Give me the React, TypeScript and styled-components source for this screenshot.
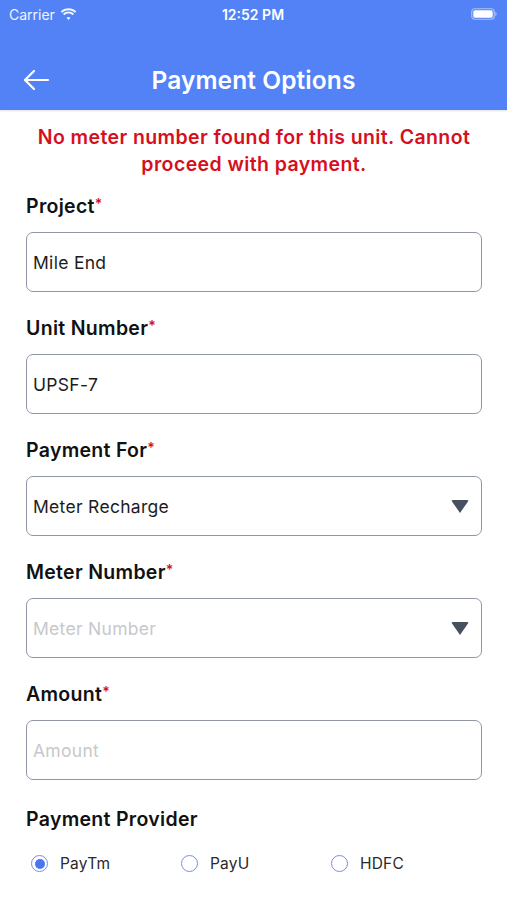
import styled, { createGlobalStyle } from "styled-components";

const GlobalStyle = createGlobalStyle`
  html, body {
    margin: 0;
    padding: 0;
    background: #ffffff;
  }
  body {
    font-family: "Inter", "Liberation Sans", sans-serif;
    -webkit-font-smoothing: antialiased;
  }
`;

const Screen = styled.div`
  width: 507px;
  height: 900px;
  overflow: hidden;
  display: flex;
  flex-direction: column;
  background: #ffffff;
`;

const Header = styled.header`
  background: #5282f6;
  height: 110px;
  display: flex;
  flex-direction: column;
  box-shadow: 0 1px 2px rgba(0, 0, 0, 0.12);
`;

const StatusBar = styled.div`
  height: 28px;
  display: grid;
  grid-template-columns: 1fr auto 1fr;
  align-items: center;
  padding: 0 10px 0 9px;
  color: #ffffff;
  font-size: 14px;
`;

const Carrier = styled.div`
  display: flex;
  align-items: center;
  gap: 5px;
  opacity: 0.92;
`;

const Clock = styled.div`
  font-weight: 600;
`;

const Battery = styled.div`
  justify-self: end;
  display: flex;
  align-items: center;
`;

const NavBar = styled.div`
  flex: 1;
  display: flex;
  align-items: center;
  position: relative;
  justify-content: center;
  padding-top: 22px;
`;

const BackButton = styled.button`
  position: absolute;
  left: 22px;
  top: calc(50% + 11px);
  transform: translateY(-50%);
  background: none;
  border: 0;
  padding: 0;
  display: flex;
`;

const Title = styled.h1`
  margin: 0;
  color: #ffffff;
  font-size: 24.5px;
  font-weight: 600;
  letter-spacing: 0.1px;
`;

const Body = styled.div`
  padding: 14px 25px 0 26px;
  display: flex;
  flex-direction: column;
`;

const ErrorText = styled.p`
  margin: 0 0 16px;
  color: #d5101e;
  text-align: center;
  font-size: 19.5px;
  font-weight: 600;
  line-height: 27px;
  letter-spacing: 0.4px;
  white-space: nowrap;
`;

const Field = styled.div`
  display: flex;
  flex-direction: column;
  margin-bottom: 24px;
`;

const Label = styled.label<{ $gap?: number }>`
  color: #111111;
  font-size: 19.5px;
  font-weight: 600;
  line-height: 24px;
  letter-spacing: 0.3px;
  margin-top: ${(p) => p.$gap ?? 0}px;
  margin-bottom: 14px;
`;

const Star = styled.span`
  color: #d5101e;
  font-size: 14px;
  vertical-align: top;
  position: relative;
  top: -2px;
`;

const Box = styled.div<{ $placeholder?: boolean }>`
  height: 60px;
  box-sizing: border-box;
  border: 1.5px solid #9096a6;
  border-radius: 7px;
  display: flex;
  align-items: center;
  justify-content: space-between;
  padding: 0 12px 0 6px;
  font-size: 17.5px;
  letter-spacing: 0.3px;
  color: ${(p) => (p.$placeholder ? "#c6c8cc" : "#1c1c1c")};
`;

const Caret = styled.span`
  width: 0;
  height: 0;
  border-left: 9px solid transparent;
  border-right: 9px solid transparent;
  border-top: 13px solid #46505e;
  border-radius: 2px;
`;

const RadioRow = styled.div`
  display: grid;
  grid-template-columns: repeat(3, 150px);
  padding: 9px 0 0 5px;
`;

const RadioOption = styled.div`
  display: flex;
  align-items: center;
  gap: 12px;
  font-size: 15.5px;
  letter-spacing: 0.2px;
  color: #2a2a2a;
`;

const RadioCircle = styled.span<{ $checked?: boolean }>`
  width: 17px;
  height: 17px;
  box-sizing: border-box;
  border-radius: 50%;
  border: 1.5px solid #6f8ef2;
  display: flex;
  align-items: center;
  justify-content: center;
  &::after {
    content: "";
    width: 10px;
    height: 10px;
    border-radius: 50%;
    background: ${(p) => (p.$checked ? "#4a76f2" : "transparent")};
  }
`;

const fields = [
  { label: "Project", value: "Mile End", required: true },
  { label: "Unit Number", value: "UPSF-7", required: true },
  { label: "Payment For", value: "Meter Recharge", required: true, select: true },
  { label: "Meter Number", value: "Meter Number", required: true, select: true, placeholder: true },
  { label: "Amount", value: "Amount", required: true, placeholder: true },
];

const providers = ["PayTm", "PayU", "HDFC"];

export default function App() {
  return (
    <Screen>
      <GlobalStyle />
      <Header>
        <StatusBar>
          <Carrier>
            Carrier
            <svg width="17" height="12" viewBox="0 0 17 12" fill="#fff">
              <path d="M8.5 2.2c2.5 0 4.8 1 6.5 2.6l1.3-1.4C14.2 1.4 11.5.2 8.5.2S2.8 1.4.7 3.4L2 4.8C3.7 3.2 6 2.2 8.5 2.2z" />
              <path d="M8.5 5.6c1.6 0 3.1.6 4.2 1.6l1.3-1.4c-1.5-1.3-3.4-2.2-5.5-2.2S4.5 4.5 3 5.8l1.3 1.4c1.1-1 2.6-1.6 4.2-1.6z" />
              <path d="M8.5 8.9c.8 0 1.5.3 2 .8l-2 2.2-2-2.2c.5-.5 1.2-.8 2-.8z" />
            </svg>
          </Carrier>
          <Clock>12:52 PM</Clock>
          <Battery>
            <svg width="26" height="12" viewBox="0 0 26 12">
              <rect x="0.75" y="0.75" width="22.5" height="10.5" rx="3" fill="none" stroke="#fff" strokeOpacity="0.5" strokeWidth="1.2" />
              <rect x="2.3" y="2.3" width="19.4" height="7.4" rx="1.6" fill="#fff" />
              <path d="M24.3 4v4c.8-.3 1.3-1.1 1.3-2s-.5-1.7-1.3-2z" fill="#fff" fillOpacity="0.5" />
            </svg>
          </Battery>
        </StatusBar>
        <NavBar>
          <BackButton aria-label="Back">
            <svg width="28" height="22" viewBox="0 0 28 22" fill="none" stroke="#fff" strokeWidth="2.2" strokeLinecap="round" strokeLinejoin="round">
              <path d="M26 11H3" />
              <path d="M12 2L3 11l9 9" />
            </svg>
          </BackButton>
          <Title>Payment Options</Title>
        </NavBar>
      </Header>
      <Body>
        <ErrorText>
          No meter number found for this unit. Cannot
          <br />
          proceed with payment.
        </ErrorText>
        {fields.map((f) => (
          <Field key={f.label}>
            <Label>
              {f.label}
              {f.required && <Star>*</Star>}
            </Label>
            <Box $placeholder={f.placeholder}>
              {f.value}
              {f.select && <Caret />}
            </Box>
          </Field>
        ))}
        <Label $gap={3}>Payment Provider</Label>
        <RadioRow>
          {providers.map((p, i) => (
            <RadioOption key={p}>
              <RadioCircle $checked={i === 0} />
              {p}
            </RadioOption>
          ))}
        </RadioRow>
      </Body>
    </Screen>
  );
}
